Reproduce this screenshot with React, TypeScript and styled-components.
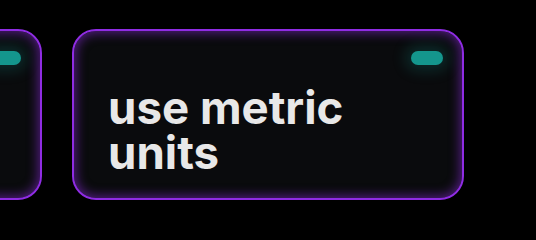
import styled, { createGlobalStyle } from "styled-components";

const GlobalStyle = createGlobalStyle`
  html, body {
    margin: 0;
    padding: 0;
    background: #000000;
  }
  body {
    font-family: "Inter", "Liberation Sans", sans-serif;
    overflow: hidden;
  }
`;

const Page = styled.div`
  width: 536px;
  height: 240px;
  background: #000000;
  overflow: hidden;
  padding-top: 29px;
  box-sizing: border-box;
`;

// carousel track, scrolled so the previous card peeks in on the left
const Track = styled.div`
  display: flex;
  gap: 30px;
  margin-left: -350px;
`;

const Card = styled.div`
  flex: 0 0 392px;
  height: 171px;
  box-sizing: border-box;
  display: flex;
  flex-direction: column;
  padding: 20px 19px 22px 34px;
  background: #0a0b0d;
  border: 2px solid #8f2ce3;
  border-radius: 24px;
  box-shadow: inset 0 0 11px 2px rgba(143, 44, 227, 0.55);
  overflow: hidden;
`;

const Toggle = styled.div<{ $on: boolean }>`
  align-self: flex-end;
  flex: 0 0 auto;
  width: 32px;
  height: 14px;
  border-radius: 7px;
  background: ${(p) => (p.$on ? "#14968d" : "#2a2d33")};
  box-shadow: ${(p) =>
    p.$on ? "0 0 14px 6px rgba(20, 150, 141, 0.22)" : "none"};
`;

const Label = styled.div`
  margin-top: 20px;
  color: #e8e8e8;
  font-family: "Inter", "Liberation Sans", sans-serif;
  font-weight: 700;
  font-size: 45.6px;
  line-height: 45px;
`;

const settings = [
  { label: "", on: true },
  { label: "use metric units", on: true },
];

export default function App() {
  return (
    <>
      <GlobalStyle />
      <Page>
        <Track>
          {settings.map((s, i) => (
            <Card key={i}>
              <Toggle $on={s.on} />
              {s.label && <Label>{s.label}</Label>}
            </Card>
          ))}
        </Track>
      </Page>
    </>
  );
}
